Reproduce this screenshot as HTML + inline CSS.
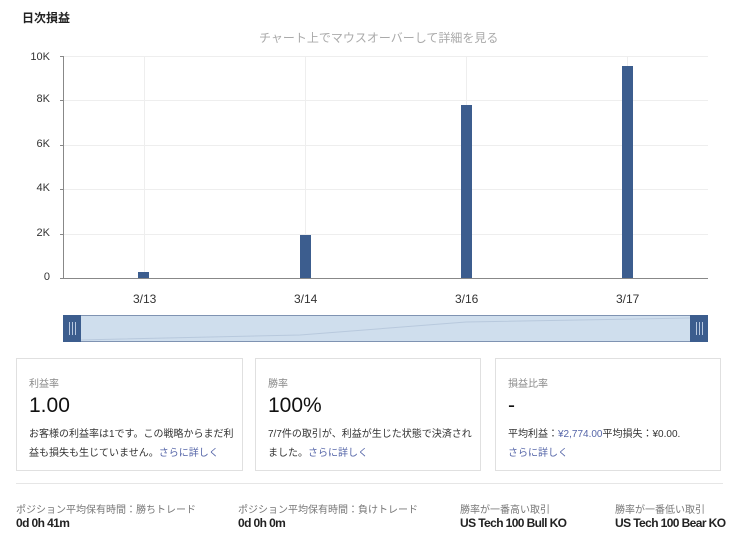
<!DOCTYPE html>
<html><head><meta charset="utf-8"><style>
*{margin:0;padding:0;box-sizing:border-box}
body{width:740px;height:550px;background:#fff;font-family:"Liberation Sans","Noto Sans CJK JP",sans-serif;color:#222;position:relative;overflow:hidden}
.a{position:absolute}
.card{position:absolute;top:358px;height:113px;border:1px solid #e0e0e0;background:#fff}
.lbl{position:absolute;left:12px;top:16px;font-size:10px;color:#888;white-space:nowrap}
.big{position:absolute;left:12px;top:35px;font-size:21px;color:#111}
.desc{position:absolute;left:12px;top:66px;font-size:10px;line-height:19px;color:#333;white-space:nowrap}
.lnk{color:#5565a8}
.bl{position:absolute;top:501px;font-size:10px;color:#777;white-space:nowrap}
.bv{position:absolute;top:516px;font-size:12px;font-weight:bold;color:#222;white-space:nowrap;letter-spacing:-0.6px}
.yl{position:absolute;right:690px;font-size:11px;color:#333}
.xl{position:absolute;top:292px;font-size:12px;color:#333}
</style></head><body>
<div class="a" style="left:22px;top:9px;font-size:12px;font-weight:bold">日次損益</div>
<div class="a" style="left:259px;top:29px;font-size:12px;color:#aaa">チャート上でマウスオーバーして詳細を見る</div>
<svg class="a" style="left:0;top:0" width="740" height="350">
<g stroke="#eee" stroke-width="1">
<line x1="63" y1="56.5" x2="708" y2="56.5"/><line x1="63" y1="100.5" x2="708" y2="100.5"/><line x1="63" y1="145.5" x2="708" y2="145.5"/><line x1="63" y1="189.5" x2="708" y2="189.5"/><line x1="63" y1="234.5" x2="708" y2="234.5"/>
<line x1="144.5" y1="56" x2="144.5" y2="278"/><line x1="305.5" y1="56" x2="305.5" y2="278"/><line x1="466.5" y1="56" x2="466.5" y2="278"/><line x1="627.5" y1="56" x2="627.5" y2="278"/>
</g>
<g stroke="#888"><line x1="63.5" y1="56" x2="63.5" y2="279"/><line x1="63" y1="278.5" x2="708" y2="278.5"/>
<line x1="60" y1="56.5" x2="63" y2="56.5"/><line x1="60" y1="100.5" x2="63" y2="100.5"/><line x1="60" y1="145.5" x2="63" y2="145.5"/><line x1="60" y1="189.5" x2="63" y2="189.5"/><line x1="60" y1="234.5" x2="63" y2="234.5"/><line x1="60" y1="278.5" x2="63" y2="278.5"/></g>
<g fill="#3c5d8e">
<rect x="138" y="272" width="11" height="6"/><rect x="300" y="235" width="11" height="43"/><rect x="461" y="105" width="11" height="173"/><rect x="622" y="66" width="11" height="212"/></g>
<rect x="63.5" y="315.5" width="644" height="26" fill="#cfdeed" stroke="#7f93b2"/>
<path d="M80 340 L300 335 L466 322 L690 318" stroke="#b8c9dd" fill="none"/>
<rect x="63" y="315" width="18" height="27" fill="#3c5d8e"/><rect x="690" y="315" width="18" height="27" fill="#3c5d8e"/>
<g stroke="#b8c8e0"><line x1="69.5" y1="322" x2="69.5" y2="335"/><line x1="72.5" y1="322" x2="72.5" y2="335"/><line x1="75.5" y1="322" x2="75.5" y2="335"/>
<line x1="696.5" y1="322" x2="696.5" y2="335"/><line x1="699.5" y1="322" x2="699.5" y2="335"/><line x1="702.5" y1="322" x2="702.5" y2="335"/></g>
</svg>
<div class="yl" style="top:51px">10K</div><div class="yl" style="top:93px">8K</div><div class="yl" style="top:138px">6K</div><div class="yl" style="top:182px">4K</div><div class="yl" style="top:227px">2K</div><div class="yl" style="top:271px">0</div>
<div class="xl" style="left:133px">3/13</div><div class="xl" style="left:294px">3/14</div><div class="xl" style="left:455px">3/16</div><div class="xl" style="left:616px">3/17</div>
<div class="card" style="left:16px;width:227px"><div class="lbl">利益率</div><div class="big">1.00</div><div class="desc">お客様の利益率は1です。この戦略からまだ利<br>益も損失も生じていません。<span class="lnk">さらに詳しく</span></div></div>
<div class="card" style="left:255px;width:226px"><div class="lbl">勝率</div><div class="big">100%</div><div class="desc">7/7件の取引が、利益が生じた状態で決済され<br>ました。<span class="lnk">さらに詳しく</span></div></div>
<div class="card" style="left:495px;width:226px"><div class="lbl">損益比率</div><div class="big">-</div><div class="desc">平均利益：<span class="lnk">¥2,774.00</span>平均損失：¥0.00.<br><span class="lnk">さらに詳しく</span></div></div>
<div class="a" style="left:16px;top:483px;width:707px;height:1px;background:#e6e6e6"></div>
<div class="bl" style="left:16px">ポジション平均保有時間：勝ちトレード</div><div class="bv" style="left:16px">0d 0h 41m</div>
<div class="bl" style="left:238px">ポジション平均保有時間：負けトレード</div><div class="bv" style="left:238px">0d 0h 0m</div>
<div class="bl" style="left:460px">勝率が一番高い取引</div><div class="bv" style="left:460px">US Tech 100 Bull KO</div>
<div class="bl" style="left:615px">勝率が一番低い取引</div><div class="bv" style="left:615px">US Tech 100 Bear KO</div>
</body></html>
